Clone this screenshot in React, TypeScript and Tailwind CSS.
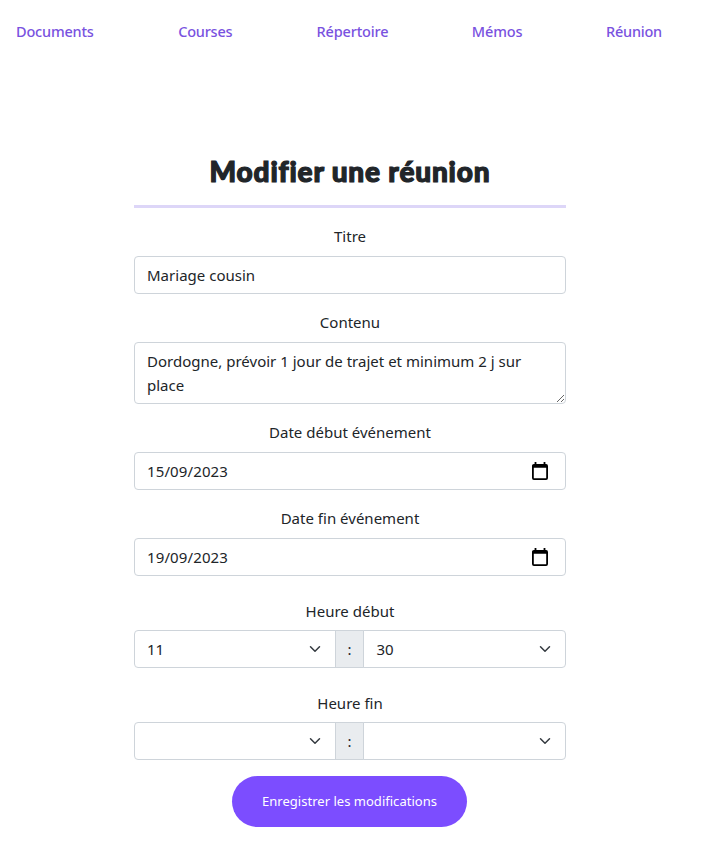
import type { ReactNode } from "react";

const links = [
  { label: "Documents", style: "w-[78px] tracking-[-0.19px]" },
  { label: "Courses", style: "w-[54px] tracking-[-0.23px]" },
  { label: "Répertoire", style: "w-[71px] tracking-[-0.15px]" },
  { label: "Mémos", style: "w-[50px] tracking-[-0.11px]" },
  { label: "Réunion", style: "w-[56px] tracking-[-0.23px]" },
];

const control =
  "block h-[38px] w-full appearance-none rounded border border-[#ced4da] bg-white px-3 text-[#212529] outline-none";

function Field({ label, children }: { label: string; children: ReactNode }) {
  return (
    <div className="mb-4">
      <label className="mb-2 block h-6 text-center leading-6">{label}</label>
      {children}
    </div>
  );
}

function DateInput({ value }: { value: string }) {
  return (
    <div className="flex h-[38px] items-center justify-between rounded border border-[#ced4da] bg-white pl-3 pr-[17px]">
      <input className="w-40 tracking-[0.12px] outline-none" defaultValue={value} />
      <svg width="16" height="18" viewBox="0 0 16 18" fill="none" stroke="#000" className="-mt-px">
        <rect x="0.9" y="2.9" width="14.2" height="14.2" rx="1" strokeWidth="1.8" />
        <path d="M1 4h14M3.5 0v3M12.5 0v3" strokeWidth="1.8" />
        <path d="M1 5h14" strokeWidth="1.5" />
      </svg>
    </div>
  );
}

function Choice({ value, className }: { value: string; className: string }) {
  return (
    <div className={`flex h-[38px] items-center justify-between border border-[#ced4da] bg-white pl-3 ${className}`}>
      <select className="w-24 appearance-none outline-none" defaultValue={value}>
        <option value={value}>{value}</option>
      </select>
      <svg width="16" height="12" viewBox="0 0 16 16" fill="none" stroke="#343a40" strokeWidth="2" strokeLinecap="round" strokeLinejoin="round">
        <path d="m2 5 6 6 6-6" />
      </svg>
    </div>
  );
}

function TimeField({ label, hour, minute }: { label: string; hour: string; minute: string }) {
  return (
    <div>
      <label className="mb-[7px] block h-6 text-center leading-6">{label}</label>
      <div className="flex">
        <Choice value={hour} className="w-[202px] rounded-l pr-[12px]" />
        <span className="-ml-px flex h-[38px] w-[30px] items-center justify-center border border-[#ced4da] bg-[#e9ecef]">:</span>
        <Choice value={minute} className="-ml-px w-[203px] rounded-r pr-[12px]" />
      </div>
    </div>
  );
}

export default function App() {
  return (
    <div className="h-[859px] overflow-hidden bg-white font-['Noto_Sans','Open_Sans',sans-serif] text-[15px] font-normal tracking-[0.01px] text-[#212529]">
      <nav className="flex h-16 items-center justify-between pl-4 pr-10 font-medium text-[#7952df]">
        {links.map((link) => (
          <a key={link.label} href="#" className={`whitespace-nowrap text-[14.5px] ${link.style}`}>
            {link.label}
          </a>
        ))}
      </nav>
      <main className="ml-[134px] w-[432px] pt-[84px]">
        <h1 className="mb-4 flex h-[60px] items-start justify-center whitespace-nowrap border-b-[3px] border-[#ddd6f8] pt-1 font-['Lato',sans-serif] text-[28px] font-black leading-[38px] tracking-[0.82px] [-webkit-text-stroke:1.2px_#212529] [stroke-linejoin:round]">
          Modifier une réunion
        </h1>
        <form>
          <Field label="Titre">
            <input className={control} defaultValue="Mariage cousin" />
          </Field>
          <Field label="Contenu">
            <textarea
              className="block h-[62px] w-full resize overflow-hidden rounded border border-[#ced4da] px-3 py-1.5 leading-6 outline-none"
              defaultValue="Dordogne, prévoir 1 jour de trajet et minimum 2 j sur place"
            />
          </Field>
          <Field label="Date début événement">
            <DateInput value="15/09/2023" />
          </Field>
          <Field label="Date fin événement">
            <DateInput value="19/09/2023" />
          </Field>
          <div className="mt-[23px] flex flex-col gap-[23px]">
            <TimeField label="Heure début" hour="11" minute="30" />
            <TimeField label="Heure fin" hour="" minute="" />
          </div>
          <button type="button" className="ml-[98px] mt-4 block h-[51px] w-[235px] whitespace-nowrap rounded-full bg-[#7c4dff] text-[13px] tracking-[0.02px] text-white">
            Enregistrer les modifications
          </button>
        </form>
      </main>
    </div>
  );
}
